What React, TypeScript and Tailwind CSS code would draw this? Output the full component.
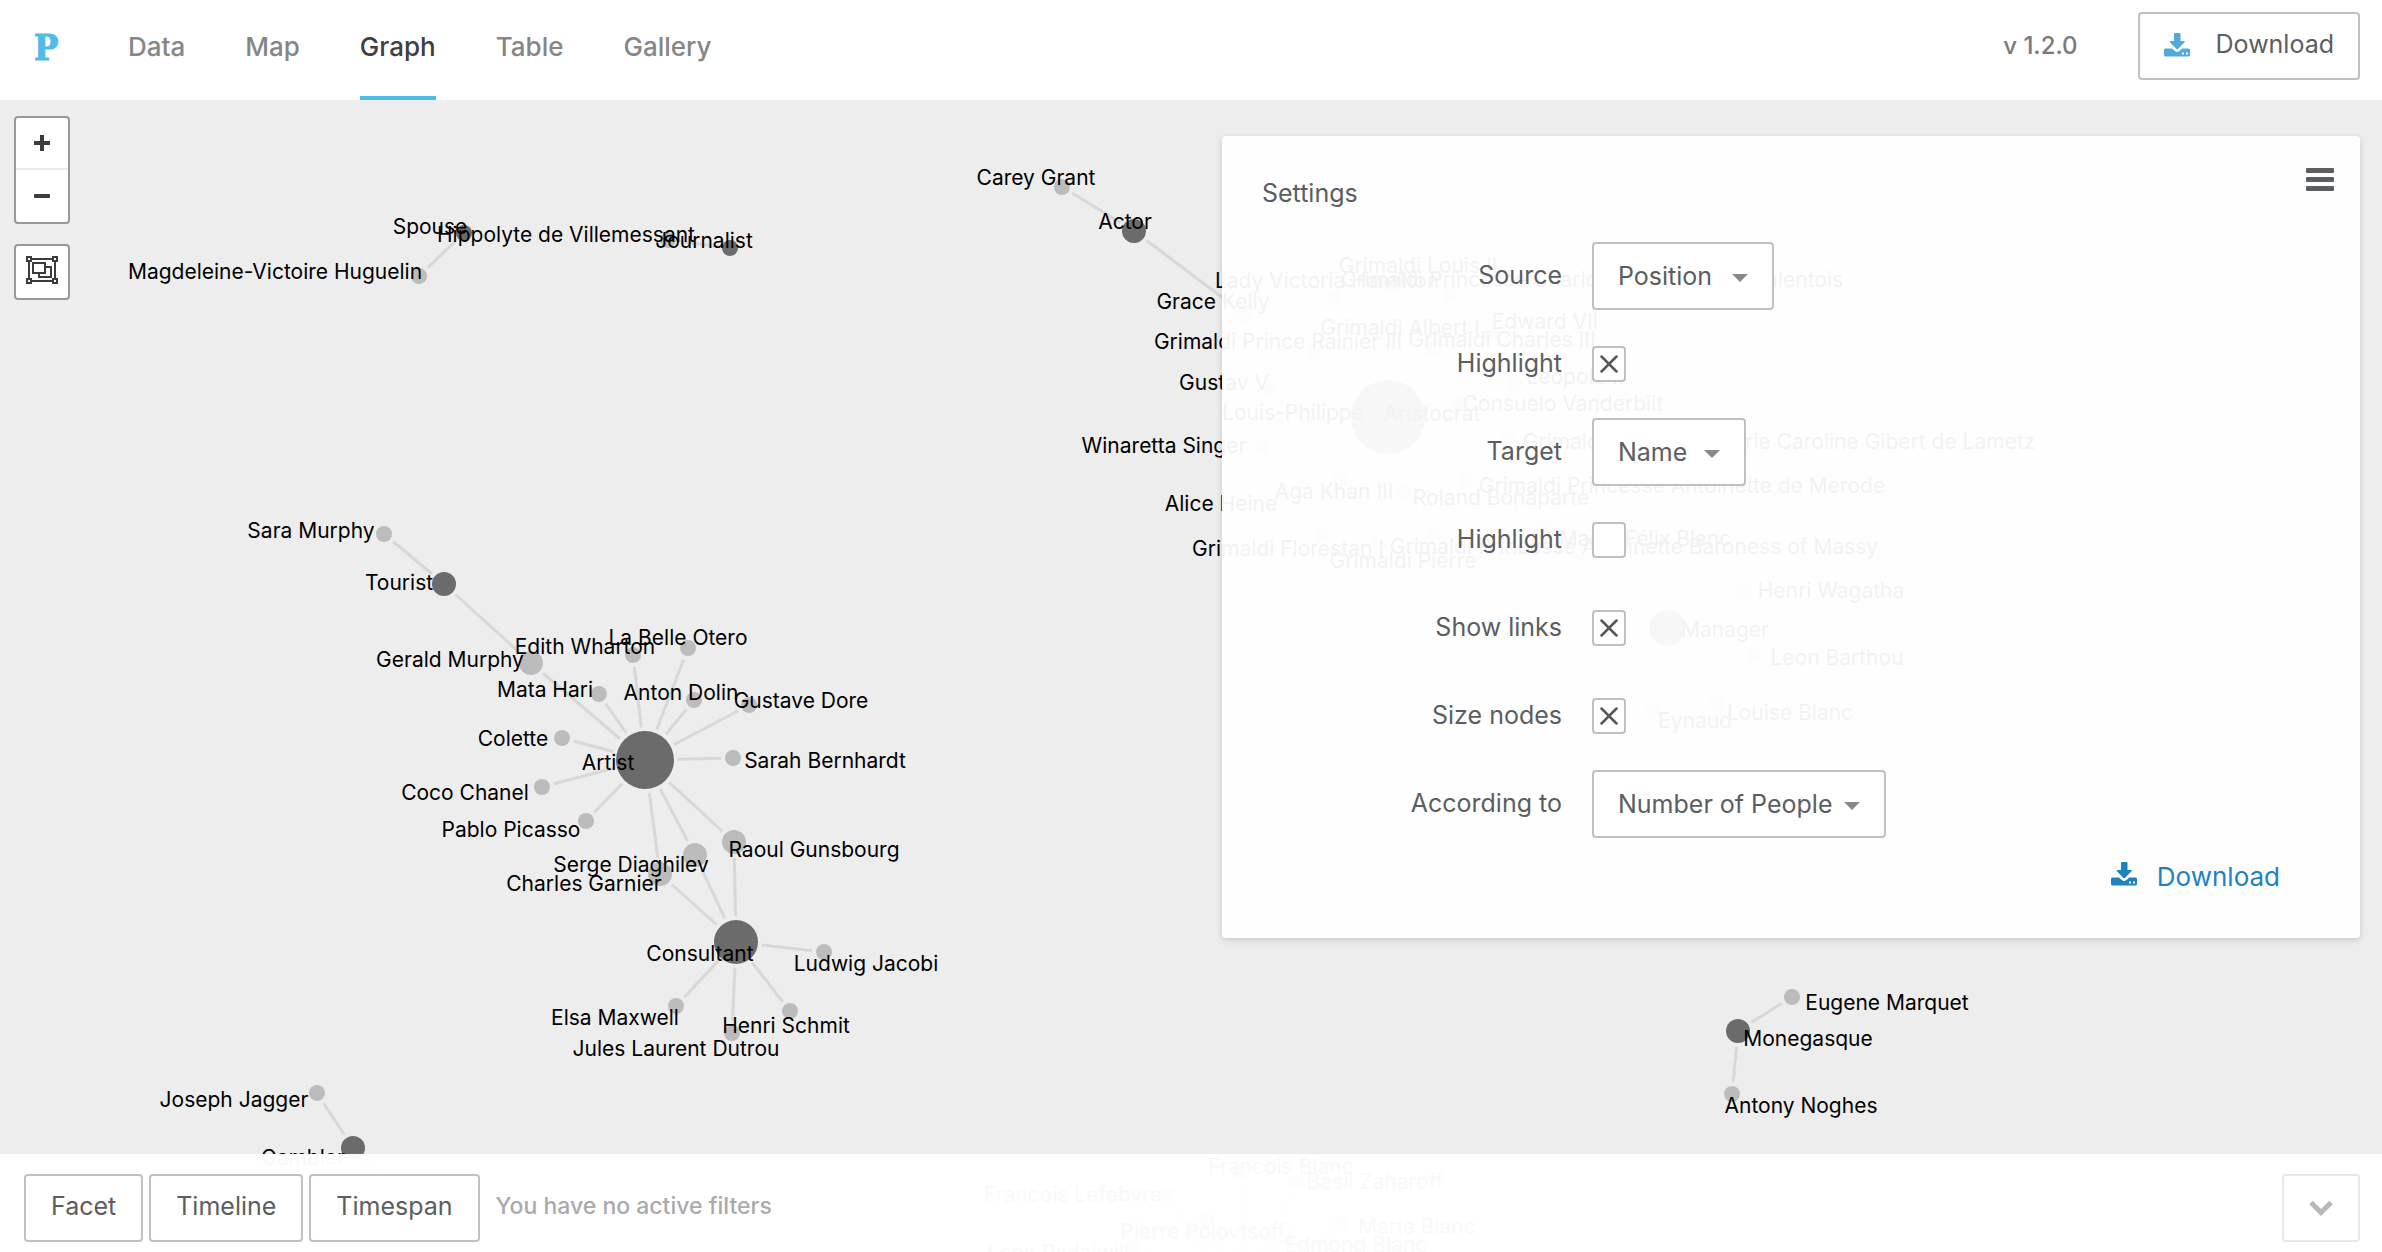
import React, { useState } from "react";

type Vertex = [x: number, y: number, r: number, dark: boolean];
type Label = [text: string, x: number, y: number];

const nodes: Record<string, Vertex> = {
  spouse: [464, 233, 8, true],
  huguelin: [419, 276, 8, false],
  hippolyte: [668, 240, 8, false],
  journalist: [730, 248, 8, true],
  grant: [1062, 187, 8, false],
  actor: [1134, 231, 12, true],
  kelly: [1243, 313, 11, false],
  rainier: [1314, 352, 8, false],
  gustav: [1267, 389, 8, false],
  philippe: [1315, 418, 8, false],
  singer: [1262, 446, 8, false],
  heine: [1282, 496, 8, false],
  florestan: [1322, 534, 8, false],
  louis: [1391, 285, 8, false],
  hamilton: [1335, 297, 8, false],
  charlotte: [1449, 295, 8, false],
  albert: [1376, 334, 8, false],
  edward: [1492, 334, 8, false],
  charles: [1433, 349, 8, false],
  leopold: [1515, 383, 8, false],
  consuelo: [1460, 404, 8, false],
  lametz: [1508, 441, 8, false],
  merode: [1465, 480, 8, false],
  khan: [1340, 480, 8, false],
  roland: [1404, 492, 8, false],
  felix: [1545, 531, 11, false],
  massy: [1434, 534, 8, false],
  pierre: [1378, 546, 8, false],
  aristocrat: [1388, 417, 37, true],
  manager: [1667, 628, 18, true],
  wagatha: [1744, 592, 8, false],
  barthou: [1754, 654, 8, false],
  louise: [1717, 703, 8, false],
  eynaud: [1653, 711, 8, false],
  sara: [384, 534, 8, false],
  tourist: [444, 584, 12, true],
  gerald: [531, 663, 12, false],
  edith: [633, 655, 8, false],
  otero: [688, 648, 8, false],
  mata: [599, 694, 8, false],
  dolin: [694, 700, 8, false],
  dore: [749, 705, 8, false],
  colette: [562, 738, 8, false],
  artist: [645, 760, 29, true],
  sarah: [733, 758, 8, false],
  chanel: [542, 787, 8, false],
  picasso: [586, 821, 8, false],
  raoul: [734, 842, 12, false],
  serge: [695, 855, 12, false],
  garnier: [660, 874, 12, false],
  consultant: [736, 942, 22, true],
  ludwig: [824, 952, 8, false],
  elsa: [676, 1006, 8, false],
  schmit: [790, 1011, 8, false],
  dutrou: [732, 1033, 8, false],
  jagger: [317, 1093, 8, false],
  gambler: [353, 1148, 12, true],
  player: [410, 1200, 8, false],
  marquet: [1792, 997, 8, false],
  monegasque: [1738, 1031, 12, true],
  noghes: [1732, 1094, 8, false],
  francois: [1241, 1173, 8, false],
  basil: [1296, 1183, 8, false],
  lefebvre: [1167, 1194, 8, false],
  polovtsoff: [1207, 1221, 8, false],
  marie: [1342, 1223, 8, false],
  edmond: [1285, 1236, 8, false],
  radziwill: [1134, 1245, 8, false],
  hub: [1240, 1300, 24, true],
};

const clusters: Record<string, string[]> = {
  spouse: ["huguelin"],
  journalist: ["hippolyte"],
  actor: ["grant", "kelly"],
  aristocrat: [
    "kelly", "rainier", "gustav", "philippe", "singer", "heine", "florestan", "louis", "hamilton",
    "charlotte", "albert", "edward", "charles", "leopold", "consuelo", "lametz", "merode", "khan",
    "roland", "felix", "massy", "pierre",
  ],
  manager: ["felix", "wagatha", "barthou", "louise", "eynaud"],
  tourist: ["sara", "gerald"],
  artist: [
    "gerald", "edith", "otero", "mata", "dolin", "dore", "colette", "sarah", "chanel", "picasso",
    "raoul", "serge", "garnier",
  ],
  consultant: ["raoul", "serge", "garnier", "ludwig", "elsa", "schmit", "dutrou"],
  gambler: ["jagger", "player"],
  monegasque: ["marquet", "noghes"],
  hub: ["francois", "basil", "lefebvre", "polovtsoff", "marie", "edmond", "radziwill"],
};

/* Each label is centred on x; y is its baseline. */
const labels: Label[] = [
  ["Spouse", 430, 234],
  ["Hippolyte de Villemessant", 566, 242],
  ["Journalist", 704, 248],
  ["Magdeleine-Victoire Huguelin", 275, 279],
  ["Carey Grant", 1036, 185],
  ["Actor", 1125, 229],
  ["Lady Victoria Hamilton", 1327, 288],
  ["Grace Kelly", 1213, 309],
  ["Grimaldi Prince Rainier III", 1278, 349],
  ["Gustav V", 1224, 390],
  ["Louis-Philippe", 1293, 420],
  ["Winaretta Singer", 1164, 453],
  ["Alice Heine", 1221, 511],
  ["Grimaldi Florestan I", 1288, 556],
  ["Grimaldi Louis II", 1418, 273],
  ["Grimaldi Princesse Charlotte Duchess de Valentois", 1592, 287],
  ["Grimaldi Albert I", 1400, 335],
  ["Edward VII", 1545, 329],
  ["Grimaldi Charles III", 1502, 347],
  ["Leopold II", 1575, 384],
  ["Consuelo Vanderbilt", 1563, 411],
  ["Aristocrat", 1432, 421],
  ["Grimaldi Princesse Marie Caroline Gibert de Lametz", 1779, 449],
  ["Grimaldi Princesse Antoinette de Merode", 1682, 493],
  ["Aga Khan III", 1334, 499],
  ["Roland Bonaparte", 1501, 505],
  ["Marie-Félix Blanc", 1645, 546],
  ["Grimaldi Princesse Antoinette Baroness of Massy", 1634, 554],
  ["Grimaldi Pierre", 1403, 568],
  ["Manager", 1725, 637],
  ["Henri Wagatha", 1831, 598],
  ["Leon Barthou", 1837, 665],
  ["Louise Blanc", 1790, 720],
  ["Eynaud", 1695, 728],
  ["Sara Murphy", 311, 538],
  ["Tourist", 399, 590],
  ["Gerald Murphy", 450, 667],
  ["Edith Wharton", 585, 654],
  ["La Belle Otero", 678, 645],
  ["Mata Hari", 545, 697],
  ["Anton Dolin", 681, 700],
  ["Gustave Dore", 801, 708],
  ["Colette", 513, 746],
  ["Artist", 608, 770],
  ["Sarah Bernhardt", 825, 768],
  ["Coco Chanel", 465, 800],
  ["Pablo Picasso", 511, 837],
  ["Raoul Gunsbourg", 814, 857],
  ["Serge Diaghilev", 631, 872],
  ["Charles Garnier", 584, 891],
  ["Consultant", 700, 961],
  ["Ludwig Jacobi", 866, 971],
  ["Elsa Maxwell", 615, 1025],
  ["Henri Schmit", 786, 1033],
  ["Jules Laurent Dutrou", 676, 1056],
  ["Joseph Jagger", 234, 1107],
  ["Gambler", 303, 1165],
  ["Eugene Marquet", 1887, 1010],
  ["Monegasque", 1808, 1046],
  ["Antony Noghes", 1801, 1113],
  ["Francois Blanc", 1281, 1174],
  ["Basil Zaharoff", 1375, 1189],
  ["Francois Lefebvre", 1073, 1202],
  ["Pierre Polovtsoff", 1203, 1239],
  ["Marie Blanc", 1417, 1234],
  ["Edmond Blanc", 1356, 1252],
  ["Leon Radziwill", 1058, 1260],
];

function Graph() {
  return (
    <svg className="absolute inset-0 size-full" role="img" aria-label="Network graph">
      <g stroke="#d8d8d8" strokeWidth="3">
        {Object.entries(clusters).flatMap(([source, targets]) =>
          targets.map((target) => {
            const [x1, y1] = nodes[source];
            const [x2, y2] = nodes[target];
            return <line key={source + target} x1={x1} y1={y1} x2={x2} y2={y2} />;
          }),
        )}
      </g>
      {Object.entries(nodes).map(([id, [cx, cy, r, dark]]) => (
        <g key={id}>
          <circle cx={cx} cy={cy} r={r + 4} fill="#ededed" />
          <circle cx={cx} cy={cy} r={r} fill={dark ? "#6b6b6b" : "#bcbcbc"} />
        </g>
      ))}
      <g className="text-[21px]" fill="#000" textAnchor="middle">
        {labels.map(([text, x, y]) => (
          <text key={text} x={x} y={y}>
            {text}
          </text>
        ))}
      </g>
    </svg>
  );
}

function DownloadIcon() {
  return (
    <svg width="26" height="24" viewBox="0 0 26 24" fill="currentColor" aria-hidden="true">
      <path d="M11 0h4.500q1 0 1 1v7h3.500q1.500 0 .5 1.200l-6.300 6.600q-1 1-2 0L6 9.200Q5 8 6.500 8H10V1q0-1 1-1z" />
      <path
        fillRule="evenodd"
        d="M1.500 15.500h6.500l2.800 2.500q2.300 2 4.700 0l2.700-2.500h6.300q1.500 0 1.500 1.500v5q0 1.500-1.500 1.500h-23Q0 23.500 0 22v-5q0-1.500 1.500-1.500zM18 19.500v2h2v-2zM22 19.500v2h2v-2z"
      />
    </svg>
  );
}

function FitIcon() {
  return (
    <svg width="32" height="28" viewBox="0 0 32 28" fill="none" stroke="currentColor" strokeWidth="2" aria-hidden="true">
      <path d="M1 1h4v4H1zM27 1h4v4h-4zM1 23h4v4H1zM27 23h4v4h-4z" />
      <path d="M5 3h22M5 25h22M3 5v18M29 5v18" />
      <path d="M7 7h12v10H7z" />
      <path d="M19 11h6v10H13v-4" />
    </svg>
  );
}

function SettingSelect({ id, width, options }: { id: string; width: string; options: string[] }) {
  return (
    <div className={`relative ${width}`}>
      <select
        id={id}
        className="h-[68px] w-full appearance-none rounded border-2 border-[#c0c0c0] bg-white pl-6 text-[#5b5e61]"
      >
        {options.map((option) => (
          <option key={option}>{option}</option>
        ))}
      </select>
      <svg
        className="pointer-events-none absolute top-8 right-[26px]"
        width="16"
        height="8"
        viewBox="0 0 16 8"
        fill="#888"
        aria-hidden="true"
      >
        <path d="M0 0h16L8 8z" />
      </svg>
    </div>
  );
}

function SettingCheck({ id, initial }: { id: string; initial: boolean }) {
  const [checked, setChecked] = useState(initial);
  return (
    <div className="flex h-[68px] items-center">
      <div className="relative h-9 w-[34px]">
        <input
          id={id}
          type="checkbox"
          checked={checked}
          onChange={() => setChecked(!checked)}
          className="block size-full appearance-none rounded border-2 border-[#c0c0c0] bg-white"
        />
        {checked && (
          <svg
            className="pointer-events-none absolute inset-0 m-auto"
            width="18"
            height="18"
            viewBox="0 0 18 18"
            stroke="#54575a"
            strokeWidth="2.500"
            strokeLinecap="round"
            aria-hidden="true"
          >
            <path d="M1.500 1.500l15 15M16.500 1.500l-15 15" />
          </svg>
        )}
      </div>
    </div>
  );
}

function FieldLabel({ id, children }: { id: string; children: React.ReactNode }) {
  return (
    <label htmlFor={id} className="flex items-center justify-end pb-0.5">
      {children}
    </label>
  );
}

function SettingsPanel() {
  return (
    <section className="absolute top-9 right-[22px] left-[calc(50%+31px)] flex flex-col rounded bg-white/95 px-10 pt-10 pb-11 text-[25px] leading-[34px] text-[#5b5e61] shadow-[0_2px_6px_rgba(0,0,0,0.16)]">
      <div className="flex items-start justify-between">
        <h2>Settings</h2>
        <button type="button" aria-label="Panel menu" className="-mt-2 mr-[-14px] text-[#5b5e61]">
          <svg width="28" height="24" viewBox="0 0 28 24" fill="currentColor" aria-hidden="true">
            <rect width="28" height="5" rx="1" />
            <rect y="9" width="28" height="5" rx="1" />
            <rect y="18" width="28" height="5" rx="1" />
          </svg>
        </button>
      </div>
      <form className="mt-8 grid grid-cols-[300px_1fr] gap-x-[30px] gap-y-5">
        <FieldLabel id="source">Source</FieldLabel>
        <SettingSelect id="source" width="w-[182px]" options={["Position", "Name"]} />
        <FieldLabel id="source-highlight">Highlight</FieldLabel>
        <SettingCheck id="source-highlight" initial />
        <FieldLabel id="target">Target</FieldLabel>
        <SettingSelect id="target" width="w-[154px]" options={["Name", "Position"]} />
        <FieldLabel id="target-highlight">Highlight</FieldLabel>
        <SettingCheck id="target-highlight" initial={false} />
        <FieldLabel id="show-links">Show links</FieldLabel>
        <SettingCheck id="show-links" initial />
        <FieldLabel id="size-nodes">Size nodes</FieldLabel>
        <SettingCheck id="size-nodes" initial />
        <FieldLabel id="according">According to</FieldLabel>
        <SettingSelect id="according" width="w-[294px]" options={["Number of People"]} />
      </form>
      <a href="#download" className="mt-[22px] mr-10 flex items-start gap-5 self-end text-[26px] text-[#1f82c0]">
        <span className="pt-0.5">
          <DownloadIcon />
        </span>
        Download
      </a>
    </section>
  );
}

function Nav() {
  const base = "flex h-full items-center border-b-4 pb-1";
  const idle = `${base} border-transparent text-[#868686]`;
  return (
    <nav className="flex h-full gap-[60px]" aria-label="Main">
      <a href="#data" className={idle}>Data</a>
      <a href="#map" className={idle}>Map</a>
      <a href="#graph" aria-current="page" className={`${base} border-[#4dbce6] text-[#404040]`}>Graph</a>
      <a href="#table" className={idle}>Table</a>
      <a href="#gallery" className={idle}>Gallery</a>
    </nav>
  );
}

const outlined = "h-[68px] rounded border-2 border-[#c0c0c0] bg-white pb-0.5 text-[#5b5e61]";
const filterButton = `${outlined} px-[25px] text-[25px]`;

export default function App() {
  return (
    <div className="relative flex h-screen flex-col overflow-hidden bg-[#ededed] font-['Inter',sans-serif]">
      <Graph />

      <header className="relative flex h-[100px] shrink-0 items-center bg-white pr-[22px] pl-[34px] text-[26px] font-medium">
        <a
          href="#home"
          aria-label="Home"
          className="w-[94px] pb-1.5 font-['DejaVu_Serif_Condensed','DejaVu_Serif',serif] text-[36px] font-bold text-[#4dbce6] [-webkit-text-stroke:1px_#4dbce6]"
        >
          P
        </a>
        <Nav />
        <div className="ml-auto flex items-center gap-[60px] pb-2">
          <span className="text-2xl text-[#7a7a7a]">v 1.2.0</span>
          <button type="button" className={`${outlined} flex items-center gap-[26px] px-6 text-[25px] font-normal`}>
            <span className="text-[#4fabdb]">
              <DownloadIcon />
            </span>
            Download
          </button>
        </div>
      </header>

      <main className="relative grow">
        <div className="flex w-[84px] flex-col gap-5 pt-4 pl-[14px] text-[#3c3c3c]">
          <div className="flex w-14 flex-col divide-y-2 divide-[#ebebeb] rounded border-2 border-[#999] bg-white">
            <button type="button" aria-label="Zoom in" className="flex h-[52px] items-center justify-center">
              <svg width="16" height="16" viewBox="0 0 16 16" fill="currentColor" aria-hidden="true">
                <path d="M6 0h4v6h6v4h-6v6H6v-6H0V6h6z" />
              </svg>
            </button>
            <button type="button" aria-label="Zoom out" className="flex h-[52px] items-center justify-center">
              <svg width="16" height="4" viewBox="0 0 16 4" fill="currentColor" aria-hidden="true">
                <rect width="16" height="4" rx="1" />
              </svg>
            </button>
          </div>
          <button
            type="button"
            aria-label="Fit to view"
            className="flex size-14 items-center justify-center rounded border-2 border-[#999] bg-white pb-1"
          >
            <FitIcon />
          </button>
        </div>
        <SettingsPanel />
      </main>

      <footer className="relative flex shrink-0 items-start gap-1.5 bg-white/[0.975] px-6 pt-5 pr-[22px] pb-2.5">
        <button type="button" className={filterButton}>Facet</button>
        <button type="button" className={filterButton}>Timeline</button>
        <button type="button" className={filterButton}>Timespan</button>
        <p className="pt-[18px] pl-2.5 text-[23px] leading-7 font-medium text-[#aaa]">You have no active filters</p>
        <button
          type="button"
          aria-label="Collapse filters"
          className="ml-auto flex h-[68px] w-[78px] items-center justify-center rounded border-2 border-[#e8e8e8] bg-white text-[#b8b8b8]"
        >
          <svg width="24" height="16" viewBox="0 0 24 16" fill="none" stroke="currentColor" strokeWidth="5" aria-hidden="true">
            <path d="M2 2.500l10 10 10-10" />
          </svg>
        </button>
      </footer>
    </div>
  );
}
